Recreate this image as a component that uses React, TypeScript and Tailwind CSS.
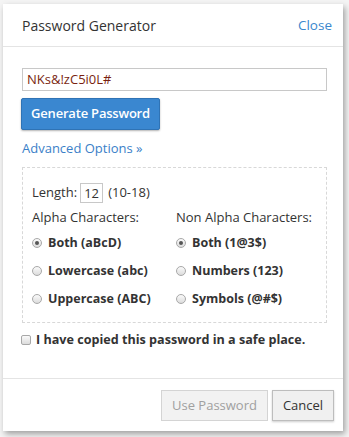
import React from "react";

const Radio = ({ checked, label }: { checked?: boolean; label: string }) => (
   <label className="flex items-center gap-[6px] h-[28px]">
      <span className="size-[10px] rounded-full border border-[#a8a8a8] bg-gradient-to-b from-[#fafafa] to-[#dcdcdc] flex items-center justify-center">
         {checked && <span className="size-[4px] rounded-full bg-[#555]" />}
      </span>
      <span className="font-bold text-[12.5px] text-[#333]">{label}</span>
   </label>
);

const App = () => {
   return (
      <main className="w-[349px] h-[437px] bg-[#f4f4f4] pt-[4px] pl-[3px] font-['Open_Sans',sans-serif] text-[#333]">
         <div className="w-[340px] h-[427px] bg-white shadow-[2px_3px_6px_rgba(0,0,0,0.35)] flex flex-col">
            {/* header */}
            <div className="h-[43px] border-b border-[#e4e4e4] flex items-center justify-between pl-[19px] pr-[11px]">
               <h2 className="text-[14px] text-[#333]">Password Generator</h2>
               <a href="#" className="text-[13.5px] text-[#3a87cd]">Close</a>
            </div>

            {/* body */}
            <div className="pl-[19px] pr-[16px] pt-[19px] flex-1">
               <input
                  readOnly
                  value="NKs&!zC5i0L#"
                  className="w-full h-[23px] border border-[#c8c8c8] px-[4px] text-[13px] text-[#7a1f10] outline-none"
               />
               <button className="mt-[7px] -ml-[1px] w-[139px] h-[32px] bg-[#3a87d0] border border-[#2f73b5] rounded-[2px] shadow-[0_1px_2px_rgba(0,0,0,0.3)] text-white text-[13px] tracking-[-0.2px] font-semibold">
                  Generate Password
               </button>
               <a href="#" className="block mt-[9px] text-[13px] text-[#3a80c8]">
                  Advanced Options »
               </a>

               <div className="mt-[9px] h-[156px] border border-dashed border-[#d8d8d8] pl-[9px] pt-[15px]">
                  <div className="flex items-center text-[13px] h-[20px]">
                     <span>Length:</span>
                     <input
                        readOnly
                        value="12"
                        className="ml-[3px] w-[23px] h-[20px] border border-[#c8c8c8] px-[3px] text-[13px] outline-none"
                     />
                     <span className="ml-[5px]">(10-18)</span>
                  </div>

                  <div className="grid grid-cols-[144px_1fr] mt-[2px]">
                     <div>
                        <p className="text-[13px] h-[24px] leading-[24px]">Alpha Characters:</p>
                        <Radio checked label="Both (aBcD)" />
                        <Radio label="Lowercase (abc)" />
                        <Radio label="Uppercase (ABC)" />
                     </div>
                     <div>
                        <p className="text-[13px] h-[24px] leading-[24px]">Non Alpha Characters:</p>
                        <Radio checked label="Both (1@3$)" />
                        <Radio label="Numbers (123)" />
                        <Radio label="Symbols (@#$)" />
                     </div>
                  </div>
               </div>

               <label className="flex items-center gap-[5px] mt-[8px] -ml-[1px]">
                  <span className="size-[10px] rounded-[2px] border border-[#a8a8a8] bg-gradient-to-b from-[#fafafa] to-[#dcdcdc]" />
                  <span className="font-bold text-[12.6px] text-[#333]">
                     I have copied this password in a safe place.
                  </span>
               </label>
            </div>

            {/* footer */}
            <div className="h-[53px] border-t border-[#e4e4e4] flex items-start justify-end gap-[4px] pt-[11px] pr-[9px]">
               <button className="w-[107px] h-[31px] border border-[#d4d4d4] bg-[#f2f2f2] text-[#a0a0a0] text-[13px]">
                  Use Password
               </button>
               <button className="w-[62px] h-[31px] border border-[#bdbdbd] bg-[#f0f0f0] shadow-[0_1px_2px_rgba(0,0,0,0.2)] text-[#333] text-[13px]">
                  Cancel
               </button>
            </div>
         </div>
      </main>
   );
};

export default App;
